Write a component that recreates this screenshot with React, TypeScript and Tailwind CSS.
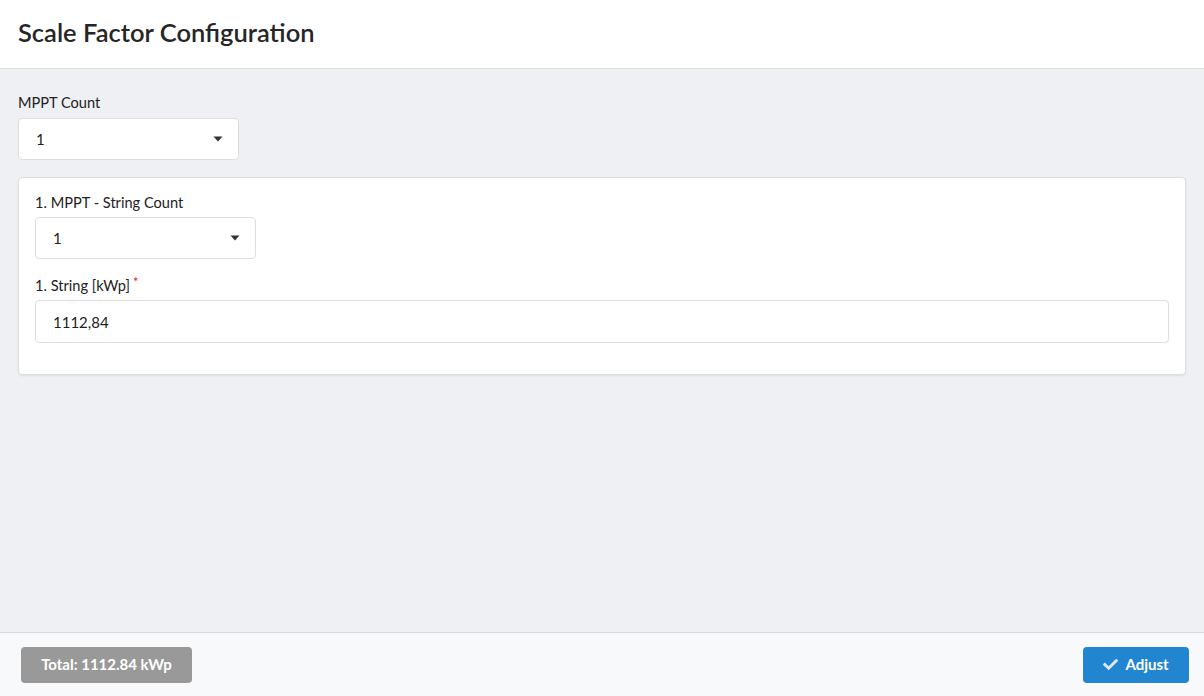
import { FaCheck } from 'react-icons/fa';

const Caret = () => (
    <svg width="10" height="6" viewBox="0 0 10 6" className="shrink-0">
        <path d="M0.5 0.5 L9.5 0.5 L5 5.5 Z" fill="#333" />
    </svg>
);

const SelectBox = ({ value, className }: { value: string; className?: string }) => (
    <div className={`flex h-[42px] w-[221px] items-center justify-between rounded-[4px] border border-[#dedede] bg-white pl-[17px] pr-[15px] ${className ?? ''}`}>
        <span className="text-[15px] text-[#222]">{value}</span>
        <Caret />
    </div>
);

const App = () => {
    return (
        <div className="flex h-[696px] w-full flex-col bg-[#eff0f4] font-['Lato','Noto_Sans',sans-serif] text-[#222]">
            {/* Header */}
            <div className="flex h-[69px] shrink-0 items-center border-b border-[#dcdcdc] bg-white pb-[4px] pl-[18px]">
                <h1 className="text-[25.5px] font-semibold text-[#262626]">Scale Factor Configuration</h1>
            </div>

            {/* Body */}
            <div className="flex-1 px-[18px] pt-[24px]">
                <label className="block text-[14.6px] leading-[20px] text-[#222]">MPPT Count</label>
                <SelectBox value="1" className="mt-[5px]" />

                <div className="mt-[17px] w-[1168px] rounded-[4px] border border-[#dededf] bg-white px-[16px] pb-[31px] pt-[15px] shadow-[0_1px_2px_rgba(0,0,0,0.08)]">
                    <label className="block text-[14.6px] leading-[20px]">1. MPPT - String Count</label>
                    <SelectBox value="1" className="mt-[4px]" />

                    <label className="mt-[17px] block text-[14.6px] leading-[20px]">
                        1. String [kWp]
                        <span className="relative -top-[4px] ml-[3px] text-[13px] text-[#db2828]">*</span>
                    </label>
                    <input
                        type="text"
                        defaultValue="1112,84"
                        className="mt-[4px] block h-[43px] w-full rounded-[4px] border border-[#dedede] bg-white px-[17px] text-[15px] text-[#222] outline-none"
                    />
                </div>
            </div>

            {/* Footer */}
            <div className="flex h-[64px] shrink-0 items-center justify-between border-t border-[#d8d8da] bg-[#f8f9fb] pl-[21px] pr-[15px]">
                <button className="h-[36px] w-[171px] rounded-[4px] bg-[#999999] text-[15px] font-bold text-white">
                    Total: 1112.84 kWp
                </button>
                <button className="flex h-[36px] w-[106px] items-center justify-center gap-[7px] rounded-[4px] bg-[#2185d0] text-[15px] font-bold text-white">
                    <FaCheck className="h-[15px] w-[15px] text-[#dbe9f6]" />
                    Adjust
                </button>
            </div>
        </div>
    );
};

export default App;
